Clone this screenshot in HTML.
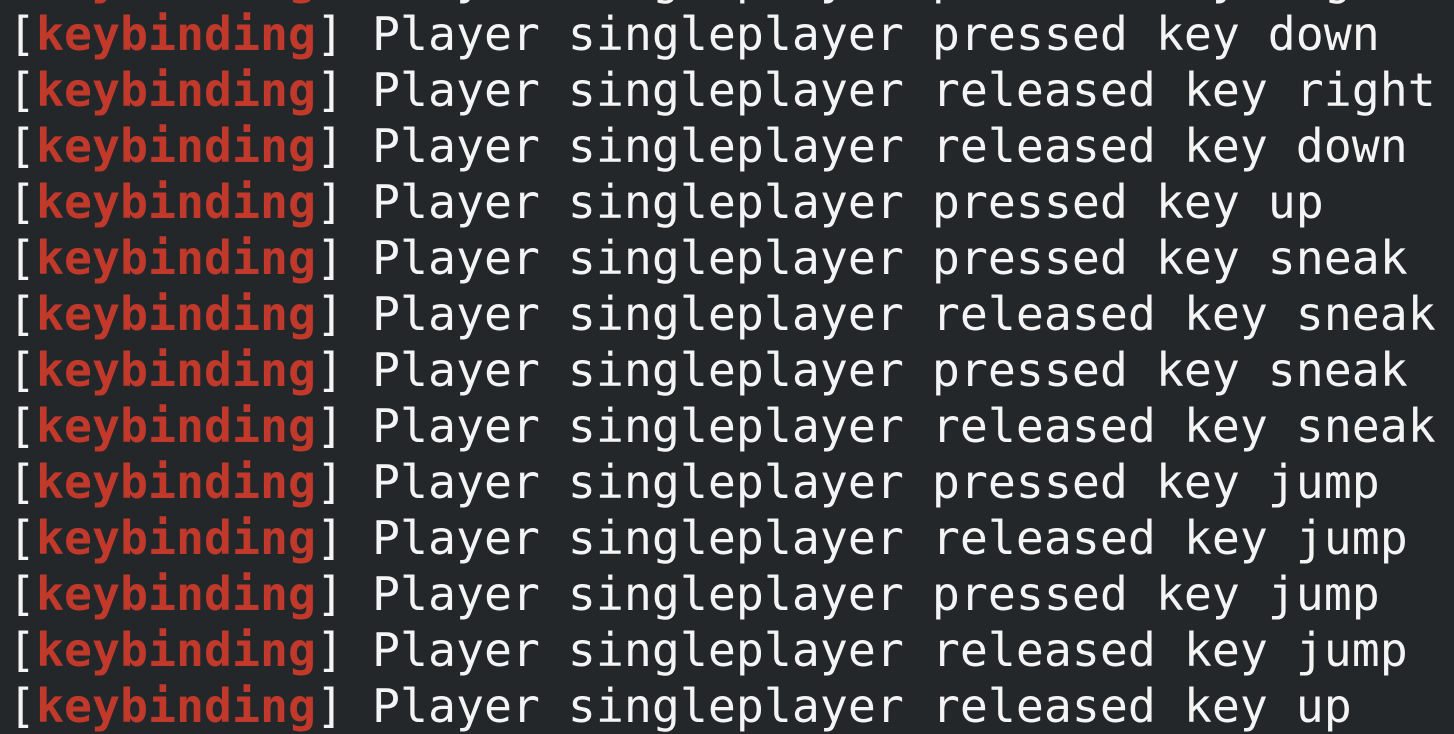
<!DOCTYPE html>
<html><head><style>
html,body{margin:0;padding:0;background:#232729;width:1454px;height:732px;overflow:hidden}
pre{margin:0;position:absolute;left:8px;top:-50px;font-family:"DejaVu Sans Mono","Liberation Mono",monospace;font-size:46.5px;line-height:56px;color:#f4f4f4}
b{color:#c0392b}
</style></head><body><pre>[<b>keybinding</b>] Player singleplayer pressed key right
[<b>keybinding</b>] Player singleplayer pressed key down
[<b>keybinding</b>] Player singleplayer released key right
[<b>keybinding</b>] Player singleplayer released key down
[<b>keybinding</b>] Player singleplayer pressed key up
[<b>keybinding</b>] Player singleplayer pressed key sneak
[<b>keybinding</b>] Player singleplayer released key sneak
[<b>keybinding</b>] Player singleplayer pressed key sneak
[<b>keybinding</b>] Player singleplayer released key sneak
[<b>keybinding</b>] Player singleplayer pressed key jump
[<b>keybinding</b>] Player singleplayer released key jump
[<b>keybinding</b>] Player singleplayer pressed key jump
[<b>keybinding</b>] Player singleplayer released key jump
[<b>keybinding</b>] Player singleplayer released key up</pre></body></html>
